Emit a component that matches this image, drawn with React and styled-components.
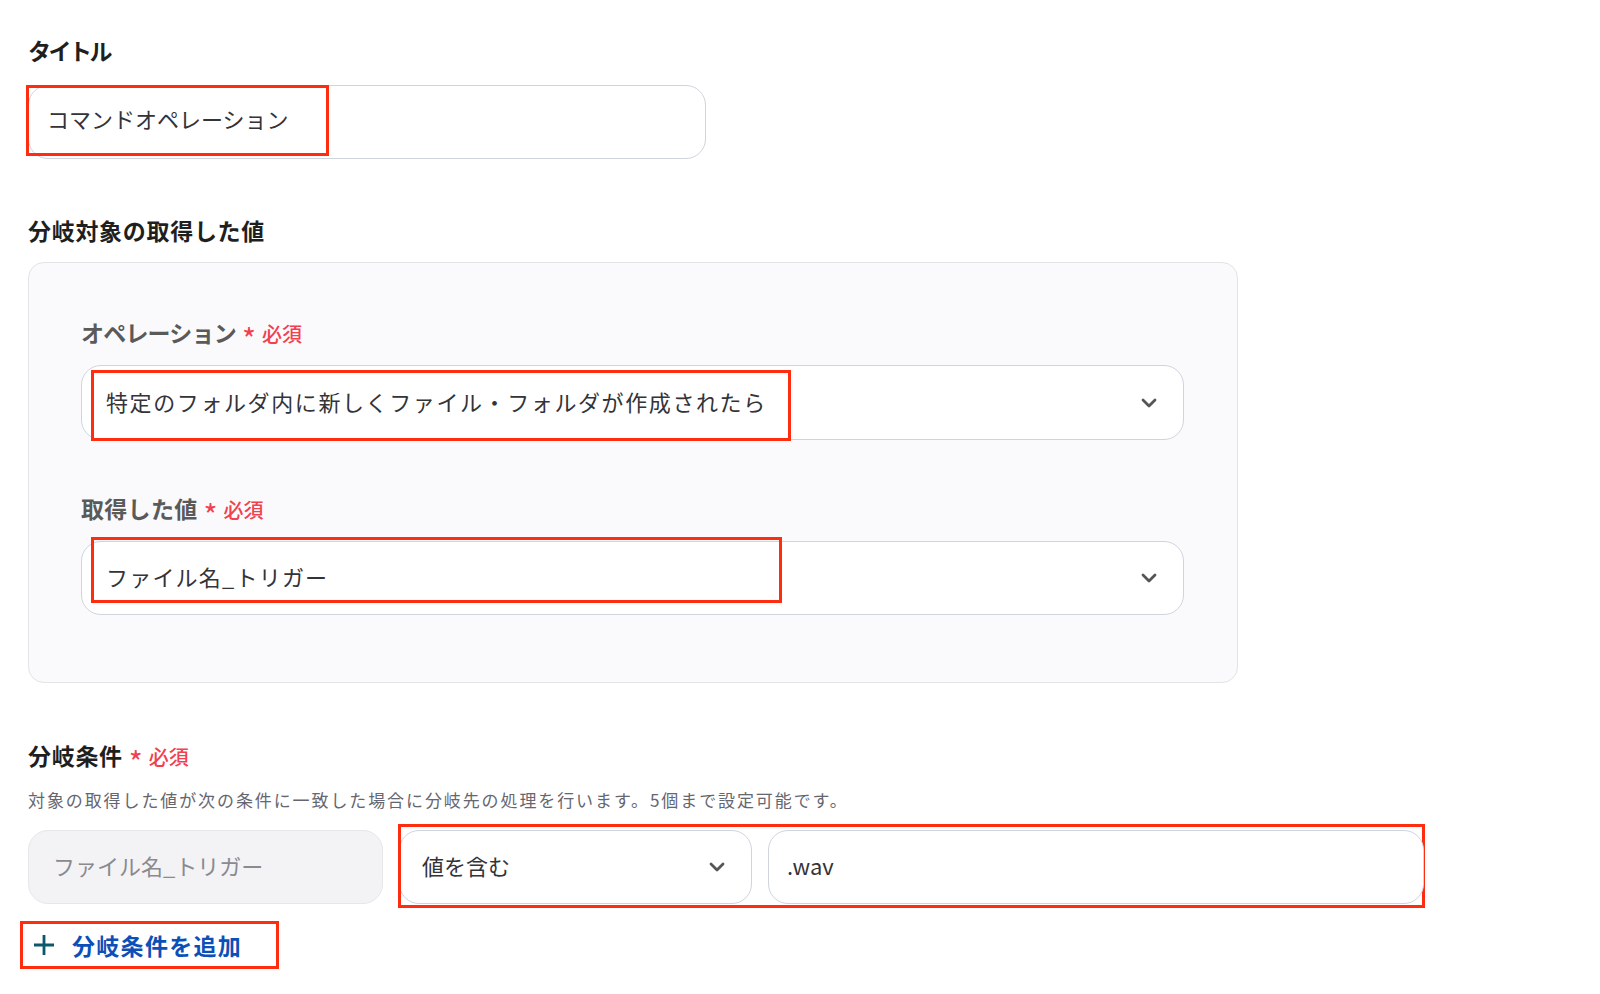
import React from 'react';
import styled, { createGlobalStyle } from 'styled-components';
import { ChevronDown } from 'lucide-react';

const GlobalStyle = createGlobalStyle`
  body {
    margin: 0;
    background: #ffffff;
    font-family: "Noto Sans CJK JP", "Noto Sans", sans-serif;
  }
`;

const Page = styled.div`
  width: 1600px;
  height: 994px;
  box-sizing: border-box;
  padding: 35px 0 0 28px;
  display: flex;
  flex-direction: column;
  overflow: hidden;
`;

const SectionLabel = styled.div`
  font-size: 23px;
  font-weight: 700;
  line-height: 30px;
  color: #1f1f1f;
  letter-spacing: ${p => p.ls || 0}px;
  display: flex;
  align-items: baseline;
  gap: 6px;
`;

const FieldLabel = styled(SectionLabel)`
  color: #5a5a5a;
`;

const Required = styled.span`
  color: #f2404f;
  font-size: 20px;
  font-weight: 500;
  letter-spacing: 0;
  display: inline-flex;
  align-items: baseline;
  gap: 6px;
  &::before {
    content: "*";
    font-size: 30px;
    font-weight: 400;
    line-height: 10px;
    position: relative;
    top: 9px;
  }
`;

const Wrap = styled.div`
  position: relative;
  width: ${p => p.w}px;
  flex: none;
`;

const Field = styled.div`
  box-sizing: border-box;
  height: ${p => p.h || 74}px;
  border: 1.5px solid ${p => (p.muted ? '#e6e6eb' : '#cfd4de')};
  background: ${p => (p.muted ? '#f3f3f6' : '#ffffff')};
  border-radius: 20px;
  display: flex;
  align-items: center;
  justify-content: space-between;
  padding: 0 ${p => p.pr || 22}px ${p => p.pb || 4}px ${p => p.pl || 18}px;
  font-size: 22px;
  color: ${p => (p.muted ? '#8a8a8f' : '#333338')};
  letter-spacing: ${p => p.ls || 0}px;
  white-space: nowrap;
  & > svg {
    margin-top: ${p => p.pb || 4}px;
  }
`;

const Mark = styled.div`
  position: absolute;
  left: ${p => p.l}px;
  top: ${p => p.t}px;
  width: ${p => p.w}px;
  height: ${p => p.h}px;
  box-sizing: border-box;
  border: 3px solid #ff2d10;
  pointer-events: none;
`;

const Panel = styled.div`
  box-sizing: border-box;
  width: 1210px;
  height: 421px;
  margin-top: 17px;
  background: #fafafc;
  border: 1.5px solid #e3e3e8;
  border-radius: 16px;
  padding: 54px 0 0 52px;
  display: flex;
  flex-direction: column;
`;

const Help = styled.div`
  margin-top: 16px;
  font-size: 17px;
  line-height: 24px;
  letter-spacing: 1.9px;
  color: #666670;
`;

const Row = styled.div`
  margin-top: 18px;
  display: flex;
  gap: 16px;
`;

const AddLink = styled.div`
  position: relative;
  margin-top: 17px;
  margin-left: -8px;
  width: 259px;
  height: 48px;
  display: flex;
  align-items: center;
  gap: 18px;
  padding-left: 14px;
  box-sizing: border-box;
  font-size: 23px;
  font-weight: 700;
  letter-spacing: 1.3px;
  color: #0b4fb8;
`;

const Plus = styled.svg`
  width: 20px;
  height: 20px;
  flex: none;
`;

export default function App() {
  return (
    <>
      <GlobalStyle />
      <Page>
        <SectionLabel ls={-2.5}>タイトル</SectionLabel>
        <Wrap w={678} style={{ marginTop: 20 }}>
          <Field pb={8}>コマンドオペレーション</Field>
          <Mark l={-2} t={0} w={303} h={71} />
        </Wrap>

        <SectionLabel ls={0.7} style={{ marginTop: 56 }}>分岐対象の取得した値</SectionLabel>
        <Panel>
          <FieldLabel ls={-0.8}>
            オペレーション<Required>必須</Required>
          </FieldLabel>
          <Wrap w={1103} style={{ marginTop: 16 }}>
            <Field h={75} pl={24} ls={1.6}>
              特定のフォルダ内に新しくファイル・フォルダが作成されたら
              <ChevronDown size={24} strokeWidth={2.8} color="#555" />
            </Field>
            <Mark l={10} t={5} w={700} h={71} />
          </Wrap>

          <FieldLabel ls={0.3} style={{ marginTop: 53 }}>
            取得した値<Required>必須</Required>
          </FieldLabel>
          <Wrap w={1103} style={{ marginTop: 16 }}>
            <Field pl={24} ls={1.2}>
              ファイル名_トリガー
              <ChevronDown size={24} strokeWidth={2.8} color="#555" />
            </Field>
            <Mark l={10} t={-4} w={691} h={66} />
          </Wrap>
        </Panel>

        <SectionLabel ls={0.7} style={{ marginTop: 57 }}>
          分岐条件<Required>必須</Required>
        </SectionLabel>
        <Help>対象の取得した値が次の条件に一致した場合に分岐先の処理を行います。5個まで設定可能です。</Help>
        <Row>
          <Wrap w={355}>
            <Field muted pl={24}>ファイル名_トリガー</Field>
          </Wrap>
          <Wrap w={353}>
            <Field pl={22} pr={22}>
              値を含む
              <ChevronDown size={24} strokeWidth={2.8} color="#555" />
            </Field>
            <Mark l={-1} t={-6} w={1027} h={84} />
          </Wrap>
          <Wrap w={656}>
            <Field pl={18}>.wav</Field>
          </Wrap>
        </Row>

        <AddLink>
          <Plus viewBox="0 0 20 20">
            <path d="M10 0v20M0 10h20" stroke="#0d5868" strokeWidth="2.8" fill="none" />
          </Plus>
          分岐条件を追加
          <Mark l={0} t={0} w={259} h={48} />
        </AddLink>
      </Page>
    </>
  );
}
